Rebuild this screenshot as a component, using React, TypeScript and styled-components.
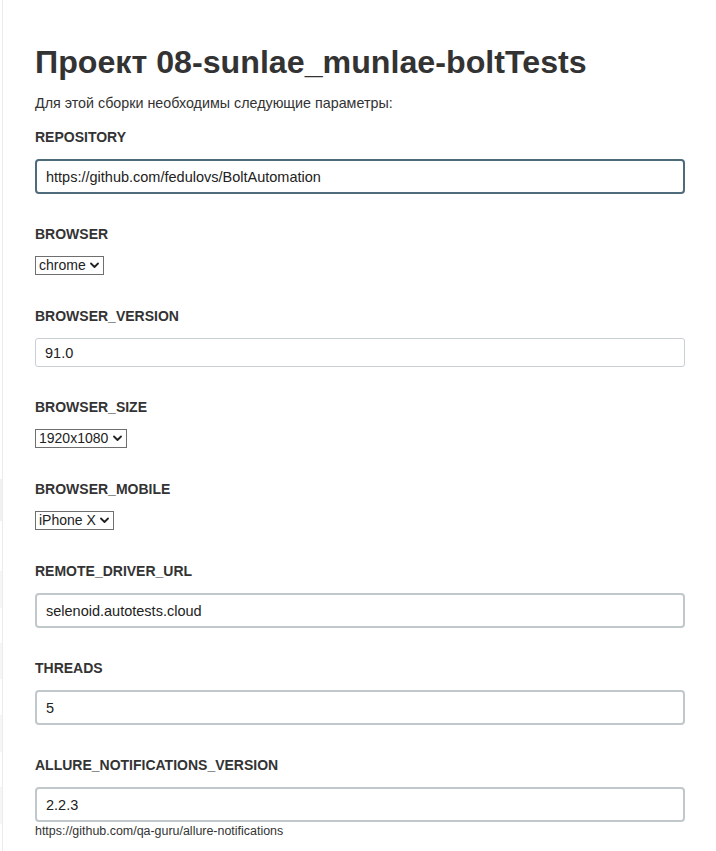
import React from "react";
import styled, { createGlobalStyle } from "styled-components";

const GlobalStyle = createGlobalStyle`
  html, body { margin: 0; padding: 0; background: #ffffff; }
  body { font-family: "Liberation Sans", Arial, Helvetica, sans-serif; color: #333333; }
  * { box-sizing: border-box; }
`;

const Page = styled.div`
  display: flex;
  min-height: 851px;
  background: #fff;
`;

const Sidebar = styled.aside`
  width: 3px;
  flex: none;
  border-right: 1px solid #ececec;
  display: flex;
  flex-direction: column;
`;

const SideBlock = styled.div<{ $h: number; $gap: number; $shade?: boolean }>`
  height: ${(p) => p.$h}px;
  margin-top: ${(p) => p.$gap}px;
  background: ${(p) => (p.$shade ? "#f1f1f1" : "#f6f6f6")};
`;

const Main = styled.main`
  flex: 1;
  padding: 44px 31px 0 32px;
`;

const Title = styled.h1`
  margin: 0 0 15px;
  font-size: 32.2px;
  line-height: 36px;
  font-weight: 700;
  color: #333;
`;

const Intro = styled.p`
  margin: 0 0 18px;
  font-size: 14.3px;
  line-height: 16px;
  color: #333;
`;

const Field = styled.div<{ $select?: boolean }>`
  margin-bottom: ${(p) => (p.$select ? 33 : 32)}px;
`;

const Label = styled.label`
  display: block;
  font-size: 14px;
  line-height: 16px;
  font-weight: 700;
  color: #333;
  margin-bottom: 7px;
`;

const Control = styled.div`
  display: flex;
  flex-direction: column;
  align-items: flex-start;
  padding-top: 7px;
`;

const TextInput = styled.input<{ $variant: "focus" | "thin" | "normal" }>`
  display: block;
  width: 100%;
  font-family: "Liberation Sans", Arial, sans-serif;
  font-size: 14.5px;
  color: #222;
  background: #fff;
  outline: none;
  padding: 0 9px;
  height: ${(p) => (p.$variant === "thin" ? 29 : 35)}px;
  border-radius: ${(p) => (p.$variant === "thin" ? 3 : 4)}px;
  border: ${(p) =>
    p.$variant === "focus"
      ? "2px solid #4e6b7b"
      : p.$variant === "thin"
      ? "1px solid #c9d0d3"
      : "2px solid #c0c8cb"};
`;

const SelectWrap = styled.span`
  position: relative;
  display: inline-flex;
`;

const Select = styled.select`
  appearance: none;
  -webkit-appearance: none;
  font-family: "Liberation Sans", Arial, sans-serif;
  font-size: 14px;
  color: #222;
  background: #fff;
  border: 1px solid #6f6f6f;
  border-radius: 0;
  height: 19px;
  line-height: 17px;
  padding: 0 17px 0 3px;
  outline: none;
`;

const Chevron = styled.svg`
  position: absolute;
  right: 5px;
  top: 6px;
  width: 9px;
  height: 7px;
  pointer-events: none;
`;

const Hint = styled.div`
  font-size: 12.45px;
  line-height: 14px;
  color: #333;
  margin-top: 2px;
`;

type Param =
  | { name: string; kind: "input"; value: string; variant: "focus" | "thin" | "normal"; hint?: string }
  | { name: string; kind: "select"; value: string };

const params: Param[] = [
  { name: "REPOSITORY", kind: "input", value: "https://github.com/fedulovs/BoltAutomation", variant: "focus" },
  { name: "BROWSER", kind: "select", value: "chrome" },
  { name: "BROWSER_VERSION", kind: "input", value: "91.0", variant: "thin" },
  { name: "BROWSER_SIZE", kind: "select", value: "1920x1080" },
  { name: "BROWSER_MOBILE", kind: "select", value: "iPhone X" },
  { name: "REMOTE_DRIVER_URL", kind: "input", value: "selenoid.autotests.cloud", variant: "normal" },
  { name: "THREADS", kind: "input", value: "5", variant: "normal" },
  {
    name: "ALLURE_NOTIFICATIONS_VERSION",
    kind: "input",
    value: "2.2.3",
    variant: "normal",
    hint: "https://github.com/qa-guru/allure-notifications",
  },
];

const sideBlocks = [
  { h: 42, gap: 479, shade: true },
  { h: 37, gap: 50 },
  { h: 36, gap: 35 },
  { h: 37, gap: 36 },
  { h: 37, gap: 35 },
];

export default function App() {
  return (
    <>
      <GlobalStyle />
      <Page>
        <Sidebar>
          {sideBlocks.map((b, i) => (
            <SideBlock key={i} $h={b.h} $gap={b.gap} $shade={b.shade} />
          ))}
        </Sidebar>
        <Main>
          <Title>Проект 08-sunlae_munlae-boltTests</Title>
          <Intro>Для этой сборки необходимы следующие параметры:</Intro>
          {params.map((p) => (
            <Field key={p.name} $select={p.kind === "select"}>
              <Label htmlFor={p.name}>{p.name}</Label>
              <Control>
                {p.kind === "input" ? (
                  <>
                    <TextInput id={p.name} $variant={p.variant} defaultValue={p.value} />
                    {p.hint && <Hint>{p.hint}</Hint>}
                  </>
                ) : (
                  <SelectWrap>
                    <Select id={p.name} defaultValue={p.value}>
                      <option value={p.value}>{p.value}</option>
                    </Select>
                    <Chevron viewBox="0 0 9 7">
                      <path d="M1 1.5 L4.5 5 L8 1.5" fill="none" stroke="#222" strokeWidth="1.8" strokeLinecap="round" strokeLinejoin="round" />
                    </Chevron>
                  </SelectWrap>
                )}
              </Control>
            </Field>
          ))}
        </Main>
      </Page>
    </>
  );
}
